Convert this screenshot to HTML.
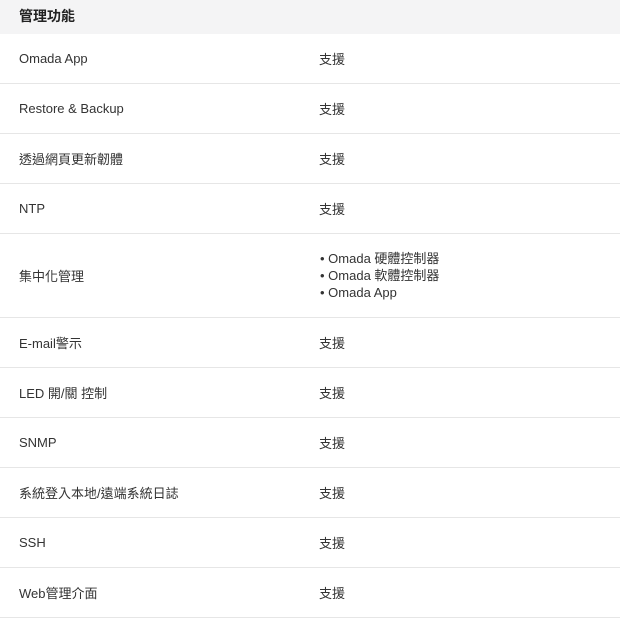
<!DOCTYPE html>
<html><head><meta charset="utf-8"><style>
*{margin:0;padding:0;box-sizing:border-box}
body{width:620px;height:620px;background:#fff;font-family:"Liberation Sans","Noto Sans CJK TC",sans-serif;color:#333;font-size:13px;overflow:hidden}
.h{height:34px;background:#f4f4f5;padding-left:19px;line-height:33px;font-weight:bold;font-size:14px;color:#222}
.r{display:flex;align-items:center;height:50px;border-bottom:1px solid #e6e6e6}
.r .a{width:300px;padding-left:19px}
.r .b{padding-left:19px}
.t{height:84px}
.t .b{line-height:17px;padding-left:20px}
</style></head><body>
<div class="h">管理功能</div>
<div class="r"><div class="a">Omada App</div><div class="b">支援</div></div>
<div class="r"><div class="a">Restore &amp; Backup</div><div class="b">支援</div></div>
<div class="r"><div class="a">透過網頁更新韌體</div><div class="b">支援</div></div>
<div class="r"><div class="a">NTP</div><div class="b">支援</div></div>
<div class="r t"><div class="a">集中化管理</div><div class="b">• Omada 硬體控制器<br>• Omada 軟體控制器<br>• Omada App</div></div>
<div class="r"><div class="a">E-mail警示</div><div class="b">支援</div></div>
<div class="r"><div class="a">LED 開/關 控制</div><div class="b">支援</div></div>
<div class="r"><div class="a">SNMP</div><div class="b">支援</div></div>
<div class="r"><div class="a">系統登入本地/遠端系統日誌</div><div class="b">支援</div></div>
<div class="r"><div class="a">SSH</div><div class="b">支援</div></div>
<div class="r"><div class="a">Web管理介面</div><div class="b">支援</div></div>
</body></html>
